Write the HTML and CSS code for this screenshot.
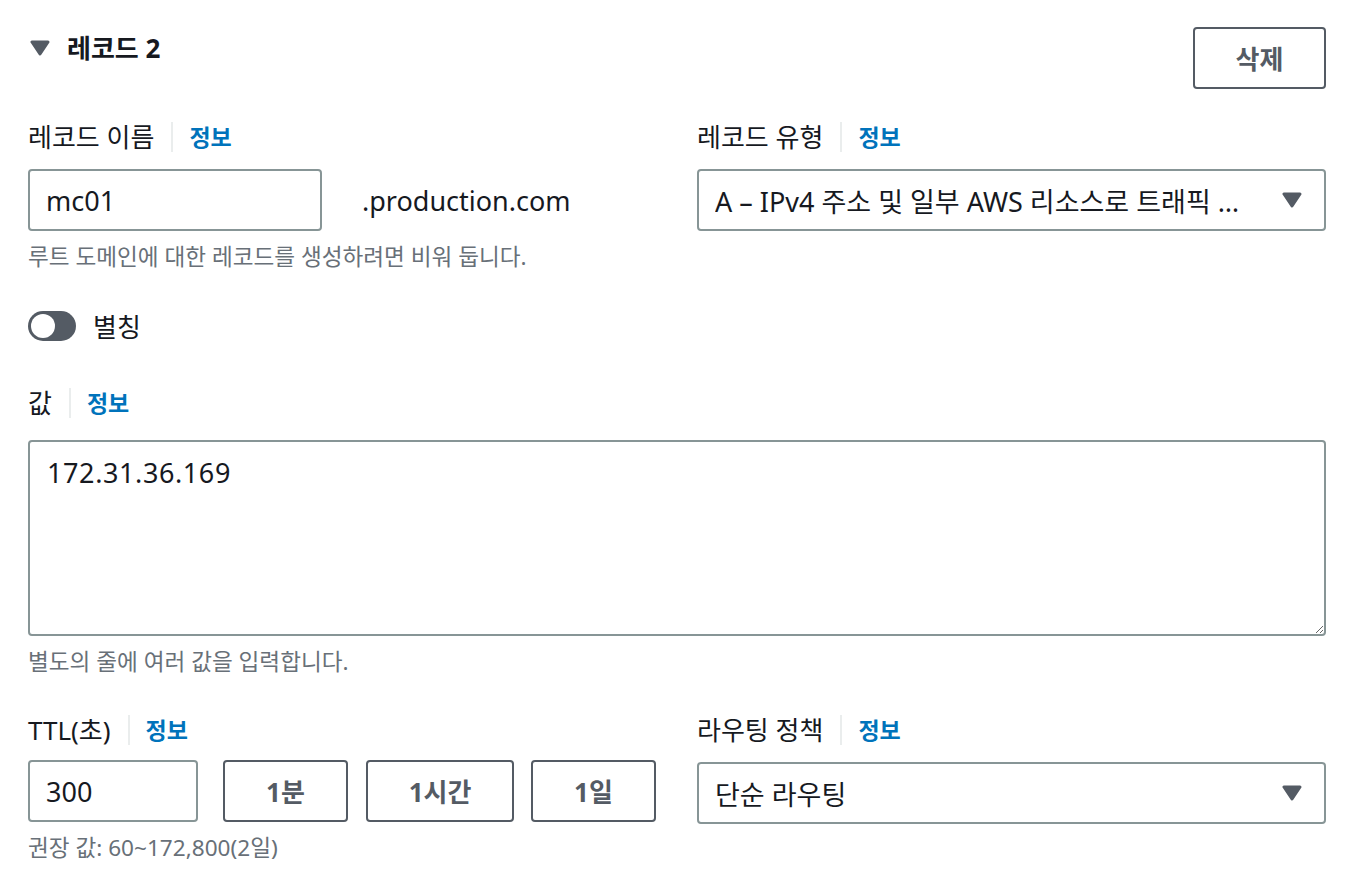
FILE: index.html
```html
<!DOCTYPE html>
<html lang="ko">
<head>
<meta charset="utf-8">
<title>레코드 2</title>
<link rel="stylesheet" href="styles.css">
</head>
<body>
<div class="page">
  <div class="header">
    <div class="title">
      <svg class="title-caret" width="20" height="16" viewBox="0 0 20 16"><polygon points="2,2 18,2 10,14" fill="#545b64" stroke="#545b64" stroke-width="3" stroke-linejoin="round"/></svg>
      <span>레코드 2</span>
    </div>
    <button class="btn btn-delete">삭제</button>
  </div>

  <div class="row">
    <div class="col">
      <div class="label"><span>레코드 이름</span><span class="sep"></span><a class="info">정보</a></div>
      <div class="name-line">
        <input class="input name-input" type="text" value="mc01">
        <span class="suffix">.production.com</span>
      </div>
      <div class="hint">루트 도메인에 대한 레코드를 생성하려면 비워 둡니다.</div>
    </div>
    <div class="col">
      <div class="label"><span>레코드 유형</span><span class="sep"></span><a class="info">정보</a></div>
      <div class="select">
        <span class="select-text">A – IPv4 주소 및 일부 AWS 리소스로 트래픽 …</span>
        <svg class="select-caret" width="20" height="16" viewBox="0 0 20 16"><polygon points="2,2 18,2 10,14" fill="#545b64" stroke="#545b64" stroke-width="3" stroke-linejoin="round"/></svg>
      </div>
    </div>
  </div>

  <div class="toggle-row">
    <span class="toggle"><span class="knob"></span></span>
    <span class="toggle-label">별칭</span>
  </div>

  <div class="label value-label"><span>값</span><span class="sep"></span><a class="info">정보</a></div>
  <textarea class="textarea">172.31.36.169</textarea>
  <div class="hint">별도의 줄에 여러 값을 입력합니다.</div>

  <div class="row ttl-row">
    <div class="col">
      <div class="label"><span>TTL(초)</span><span class="sep"></span><a class="info">정보</a></div>
      <div class="ttl-line">
        <input class="input ttl-input" type="text" value="300">
        <button class="btn btn-ttl b1">1분</button>
        <button class="btn btn-ttl b2">1시간</button>
        <button class="btn btn-ttl b3">1일</button>
      </div>
      <div class="hint">권장 값: 60~172,800(2일)</div>
    </div>
    <div class="col">
      <div class="label"><span>라우팅 정책</span><span class="sep"></span><a class="info">정보</a></div>
      <div class="select">
        <span class="select-text">단순 라우팅</span>
        <svg class="select-caret" width="20" height="16" viewBox="0 0 20 16"><polygon points="2,2 18,2 10,14" fill="#545b64" stroke="#545b64" stroke-width="3" stroke-linejoin="round"/></svg>
      </div>
    </div>
  </div>
</div>
</body>
</html>
```

FILE: styles.css
```css
* { box-sizing: border-box; }
html, body { margin: 0; padding: 0; background: #ffffff; }
body {
  font-family: "Noto Sans", "Noto Sans CJK KR", sans-serif;
  color: #16191f;
}
.page {
  padding: 27px 28px 0 28px;
}
.header {
  display: flex;
  justify-content: space-between;
  align-items: flex-start;
}
.title {
  display: flex;
  align-items: center;
  height: 40px;
  font-size: 26px;
  font-weight: 700;
  padding-left: 2px;
}
.title-caret { margin-right: 17px; margin-top: 1px; }
.btn {
  font-family: "Noto Sans", "Noto Sans CJK KR", sans-serif;
  background: #ffffff;
  border: 2px solid #545b64;
  border-radius: 4px;
  color: #545b64;
  font-weight: 700;
  font-size: 26px;
  height: 62px;
  padding: 0;
  cursor: pointer;
}
.btn-delete { width: 133px; }
.row {
  display: grid;
  grid-template-columns: 1fr 1fr;
  column-gap: 40px;
  margin-top: 30px;
}
.label {
  display: flex;
  align-items: center;
  height: 36px;
  font-size: 26px;
  line-height: 36px;
}
.sep {
  width: 2px;
  height: 30px;
  background: #eaeded;
  margin: 0 16px 0 17px;
}
.info {
  color: #0073bb;
  font-weight: 700;
  font-size: 23px;
}
.input {
  font-family: "Noto Sans", "Noto Sans CJK KR", sans-serif;
  font-size: 27px;
  color: #16191f;
  height: 62px;
  border: 2px solid #879596;
  border-radius: 4px;
  padding: 0 16px;
  outline: none;
  background: #fff;
}
.name-line {
  display: flex;
  align-items: center;
  margin-top: 14px;
}
.name-input { width: 294px; }
.suffix {
  font-size: 27px;
  margin-left: 40px;
}
.hint {
  font-size: 22.6px;
  color: #687078;
  line-height: 30px;
  margin-top: 11px;
}
.select {
  display: flex;
  align-items: center;
  justify-content: space-between;
  height: 62px;
  border: 2px solid #879596;
  border-radius: 4px;
  padding: 0 22px 0 16px;
  margin-top: 14px;
  font-size: 27px;
}
.select-text { white-space: nowrap; overflow: hidden; }
.toggle-row {
  display: flex;
  align-items: center;
  margin-top: 39px;
  height: 30px;
}
.toggle {
  display: inline-flex;
  align-items: center;
  width: 48px;
  height: 30px;
  border-radius: 15px;
  background: #545b64;
  padding: 0 3px;
}
.knob {
  width: 24px;
  height: 24px;
  border-radius: 50%;
  background: #ffffff;
}
.toggle-label {
  font-size: 26px;
  margin-left: 17px;
}
.value-label { margin-top: 44px; }
.textarea {
  display: block;
  width: 100%;
  height: 196px;
  margin-top: 19px;
  border: 2px solid #879596;
  border-radius: 4px;
  padding: 12px 17px;
  font-family: "Noto Sans", "Noto Sans CJK KR", sans-serif;
  font-size: 27px;
  letter-spacing: 0.6px;
  color: #16191f;
  outline: none;
  resize: vertical;
}
.ttl-row { margin-top: 35px; }
.ttl-line {
  display: flex;
  align-items: center;
  margin-top: 12px;
}
.ttl-input { width: 170px; }
.btn-ttl { margin-left: 25px; }
.b1 { width: 125px; }
.b2 { width: 148px; margin-left: 18px; }
.b3 { width: 125px; margin-left: 17px; }
```
